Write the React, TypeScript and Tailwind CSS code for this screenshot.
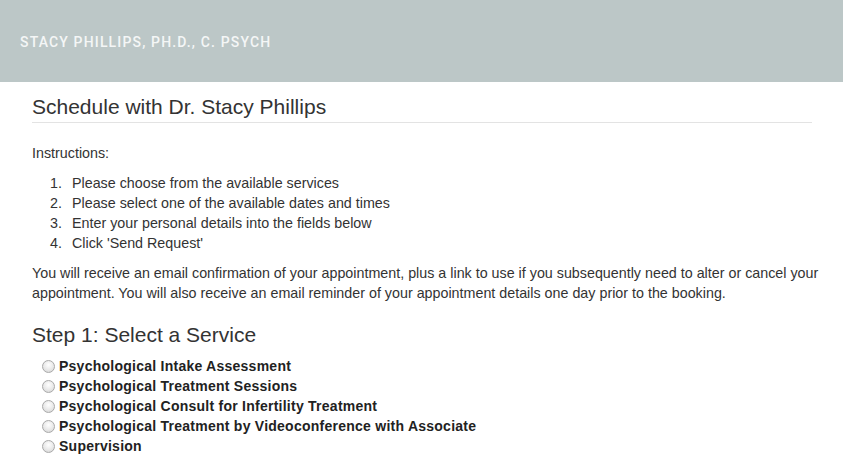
const services = [
  "Psychological Intake Assessment",
  "Psychological Treatment Sessions",
  "Psychological Consult for Infertility Treatment",
  "Psychological Treatment by Videoconference with Associate",
  "Supervision",
];

const steps = [
  "Please choose from the available services",
  "Please select one of the available dates and times",
  "Enter your personal details into the fields below",
  "Click 'Send Request'",
];

function Radio() {
  return (
    <span className="inline-block w-[13px] h-[13px] rounded-full border border-[#a9a9a9] bg-[radial-gradient(circle_at_50%_35%,#ffffff_0%,#e6e6e6_60%,#cfcfcf_100%)] shrink-0" />
  );
}

export default function App() {
  return (
    <div className="min-h-[465px] bg-white font-['Liberation_Sans',Arial,sans-serif] text-[#333333]">
      <header className="h-[82px] bg-[#bcc7c7] flex items-center px-5">
        <span className="font-['Roboto',sans-serif] font-medium text-[14px] tracking-[1.15px] text-[#f4f6f6] pt-[2px]">
          STACY PHILLIPS, PH.D., C. PSYCH
        </span>
      </header>

      <main className="px-8">
        <h1 className="text-[21px] leading-[24px] pt-[13px] pb-[3px] border-b border-[#e3e3e3] w-[780px]">
          Schedule with Dr. Stacy Phillips
        </h1>

        <div className="text-[14.3px] leading-[20px]">
          <p className="mt-[20px]">Instructions:</p>

          <ol className="mt-[10px] pl-[10px]">
            {steps.map((s, i) => (
              <li key={s} className="flex">
                <span className="w-[30px] text-right pr-[10px]">{i + 1}.</span>
                <span>{s}</span>
              </li>
            ))}
          </ol>

          <p className="mt-[10px] w-[790px]">
            You will receive an email confirmation of your appointment, plus a link to use if you subsequently need to alter or cancel your appointment. You will also receive an email reminder of your appointment details one day prior to the booking.
          </p>
        </div>

        <h2 className="text-[21px] leading-[26px] mt-[19px]">Step 1: Select a Service</h2>

        <div className="mt-[8px] pl-[10px]">
          {services.map((s) => (
            <label key={s} className="flex items-center gap-[4px] h-[20px] text-[14px] font-bold tracking-[0.25px] text-[#222222]">
              <Radio />
              <span>{s}</span>
            </label>
          ))}
        </div>
      </main>
    </div>
  );
}
